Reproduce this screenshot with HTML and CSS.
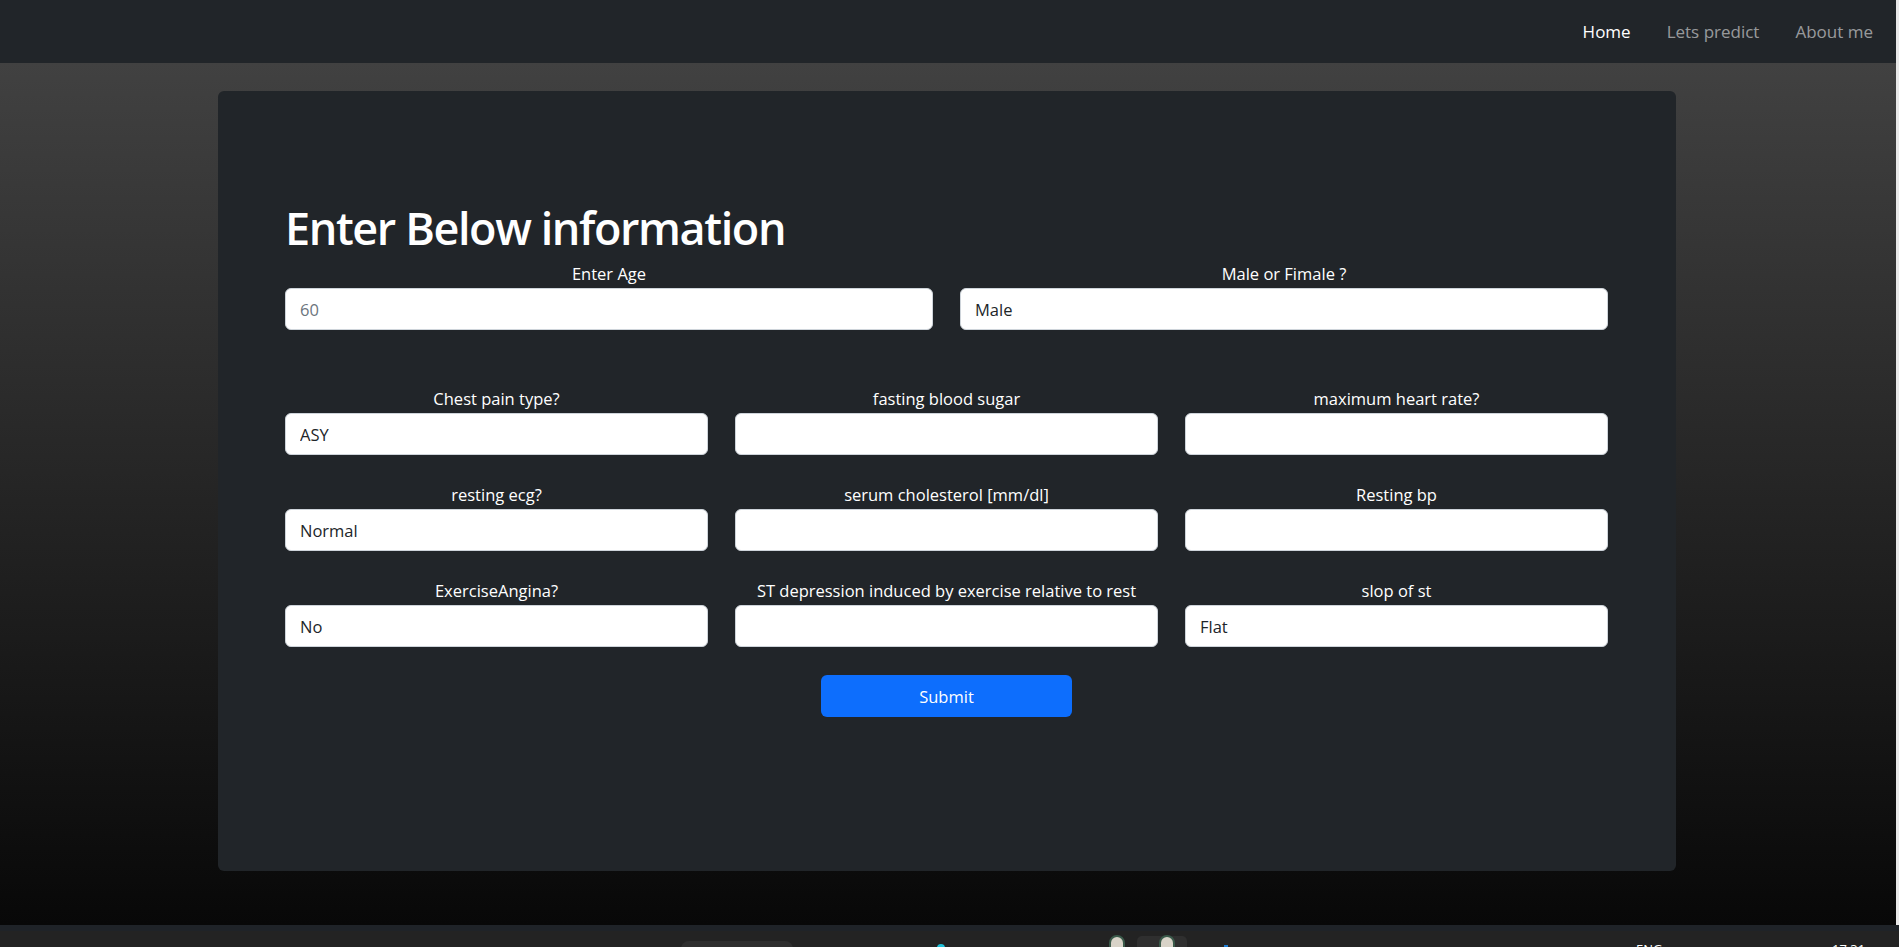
FILE: index.html
```html
<!DOCTYPE html>
<html lang="en">
<head>
<meta charset="utf-8">
<title>Heart disease prediction</title>
<link rel="stylesheet" href="styles.css">
</head>
<body>
<div class="page">
  <nav class="navbar">
    <a class="nav-link active" href="#">Home</a>
    <a class="nav-link" href="#">Lets predict</a>
    <a class="nav-link" href="#">About me</a>
  </nav>
  <main class="main">
    <section class="card">
      <h1 class="title">Enter Below information</h1>
      <form class="form">
        <div class="row row-2">
          <div class="field"><label>Enter Age</label><input class="control" type="text" placeholder="60"></div>
          <div class="field"><label>Male or Fimale ?</label><input class="control" type="text" value="Male"></div>
        </div>
        <div class="row row-3">
          <div class="field"><label>Chest pain type?</label><input class="control" type="text" value="ASY"></div>
          <div class="field"><label>fasting blood sugar</label><input class="control" type="text"></div>
          <div class="field"><label>maximum heart rate?</label><input class="control" type="text"></div>
          <div class="field"><label>resting ecg?</label><input class="control" type="text" value="Normal"></div>
          <div class="field"><label>serum cholesterol [mm/dl]</label><input class="control" type="text"></div>
          <div class="field"><label>Resting bp</label><input class="control" type="text"></div>
          <div class="field"><label>ExerciseAngina?</label><input class="control" type="text" value="No"></div>
          <div class="field"><label>ST depression induced by exercise relative to rest</label><input class="control" type="text"></div>
          <div class="field"><label>slop of st</label><input class="control" type="text" value="Flat"></div>
        </div>
        <div class="actions"><button class="btn" type="button">Submit</button></div>
      </form>
    </section>
  </main>
</div>
<footer class="taskbar">
  <div class="tb-search"></div>
  <div class="tb-icon tb-cyan"></div>
  <div class="tb-icon tb-avatar"></div>
  <div class="tb-window"><div class="tb-icon tb-avatar"></div></div>
  <div class="tb-icon tb-blue"></div>
  <span class="tb-text tb-lang">ENG</span>
  <span class="tb-text tb-clock">17:31</span>
</footer>
</body>
</html>
```
FILE: styles.css
```css
* { box-sizing: border-box; }
html, body { margin: 0; padding: 0; }
body {
  width: 1899px;
  height: 947px;
  overflow: hidden;
  font-family: "Open Sans", "Noto Sans", sans-serif;
  background: #080808;
  display: flex;
  flex-direction: column;
}
.page {
  height: 925px;
  display: flex;
  flex-direction: column;
  border-right: 3px solid #e9e9e9;
}
.navbar {
  height: 63px;
  flex: none;
  background: #212529;
  display: flex;
  align-items: center;
  justify-content: flex-end;
  gap: 36px;
  padding-right: 23px;
}
.nav-link {
  font-size: 17px;
  color: rgba(255,255,255,0.55);
  text-decoration: none;
  line-height: 26px;
}
.nav-link.active { color: #fff; }
.main {
  flex: 1;
  background: linear-gradient(#414141, #080808);
  padding-top: 28px;
  padding-left: 218px;
}
.card {
  width: 1458px;
  height: 780px;
  background: #212529;
  border-radius: 6px;
  padding: 109px 68px 0 67px;
}
.title {
  margin: 0;
  color: #fff;
  font-size: 45px;
  font-weight: 600;
  line-height: 56px;
  letter-spacing: -1.4px;
}
.form { margin-top: 5px; }
.row { display: grid; column-gap: 27px; }
.row-2 { grid-template-columns: 1fr 1fr; margin-bottom: 56px; }
.row-3 { grid-template-columns: 1fr 1fr 1fr; row-gap: 27px; }
.field { display: flex; flex-direction: column; }
.field label {
  color: #fff;
  font-size: 16.5px;
  line-height: 26px;
  text-align: center;
  margin-bottom: 1px;
}
.control {
  height: 42px;
  width: 100%;
  border: 1px solid #ced4da;
  border-radius: 6px;
  background: #fff;
  padding: 0 14px;
  font-family: inherit;
  font-size: 16.5px;
  color: #212529;
  outline: none;
}
.control::placeholder { color: #6c757d; }
.actions { display: flex; justify-content: center; margin-top: 28px; }
.btn {
  width: 251px;
  height: 42px;
  border: none;
  border-radius: 6px;
  background: #0d6efd;
  color: #fff;
  font-family: inherit;
  font-size: 16.5px;
  cursor: pointer;
}
.taskbar {
  height: 22px;
  flex: none;
  position: relative;
  overflow: hidden;
  background: linear-gradient(#1f2328 0, #1f2328 6px, #232323 6px);
}
.tb-search {
  position: absolute;
  left: 681px; top: 16px;
  width: 112px; height: 20px;
  border-radius: 8px;
  background: #2e2e2e;
}
.tb-window {
  position: absolute;
  left: 1137px; top: 11px;
  width: 50px; height: 20px;
  border-radius: 5px;
  background: #2f2f2f;
}
.tb-icon { position: absolute; }
.tb-cyan { left: 937px; top: 19px; width: 8px; height: 6px; border-radius: 4px 4px 0 0; background: #1ec0d8; }
.tb-avatar { left: 1109px; top: 10px; width: 16px; height: 20px; border-radius: 8px 8px 0 0; background: #d8d3c8; border: 2px solid #3a5a4a; }
.tb-window .tb-avatar { left: 22px; top: -1px; }
.tb-blue { left: 1224px; top: 20px; width: 4px; height: 4px; background: #1c7bd1; }
.tb-text {
  position: absolute;
  top: 15px;
  color: #fff;
  font-size: 13px;
  font-family: "Open Sans", sans-serif;
}
.tb-lang { left: 1636px; }
.tb-clock { left: 1832px; }
```
